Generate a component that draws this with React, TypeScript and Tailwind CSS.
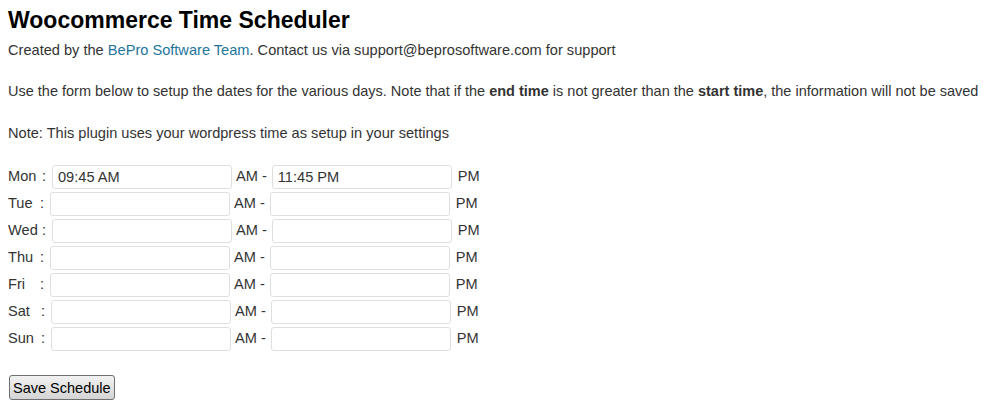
import React from "react";

const days = [
  { name: "Mon", width: "w-[40px]", start: "09:45 AM", end: "11:45 PM" },
  { name: "Tue", width: "w-[38px]", start: "", end: "" },
  { name: "Wed", width: "w-[40px]", start: "", end: "" },
  { name: "Thu", width: "w-[38px]", start: "", end: "" },
  { name: "Fri", width: "w-[38px]", start: "", end: "" },
  { name: "Sat", width: "w-[39px]", start: "", end: "" },
  { name: "Sun", width: "w-[39px]", start: "", end: "" },
];

export default function App() {
  return (
    <div className="min-h-[404px] bg-white px-2 pt-[7px] font-['Liberation_Sans',Arial,sans-serif] text-[14.6px] text-[#333]">
      <h2 className="text-[23px] font-bold leading-[26px] text-black">
        Woocommerce Time Scheduler
      </h2>
      <p className="mt-[8px] leading-[18px]">
        Created by the{" "}
        <a href="#" className="text-[#21759b]">
          BePro Software Team
        </a>
        . Contact us via support@beprosoftware.com for support
      </p>
      <p className="mt-[23px] whitespace-nowrap text-[14.5px] leading-[18px]">
        Use the form below to setup the dates for the various days. Note that
        if the <b>end time</b> is not greater than the <b>start time</b>, the
        information will not be saved
      </p>
      <p className="mt-[24px] leading-[18px]">
        Note: This plugin uses your wordpress time as setup in your settings
      </p>

      <div className="mt-[23px] flex flex-col gap-[3px]">
        {days.map((day) => (
          <div key={day.name} className="flex h-[24px] items-center">
            <span className={`${day.width} flex justify-between pr-[2px]`}>
              <span>{day.name}</span>
              <span>:</span>
            </span>
            <input
              type="text"
              defaultValue={day.start}
              className="ml-[4px] h-[24px] w-[180px] rounded-[3px] border border-[#dfdfdf] px-[5px] text-[14.6px] text-[#333] outline-none"
            />
            <span className="ml-[4px]">AM -</span>
            <input
              type="text"
              defaultValue={day.end}
              className="ml-[5px] h-[24px] w-[180px] rounded-[3px] border border-[#dfdfdf] px-[5px] text-[14.6px] text-[#333] outline-none"
            />
            <span className="ml-[6px]">PM</span>
          </div>
        ))}
      </div>

      <button
        type="button"
        className="ml-[1px] mt-[24px] h-[25px] rounded-[3px] border border-[#707070] bg-gradient-to-b from-[#f2f2f2] to-[#d4d4d4] px-[3px] text-[14.5px] leading-[20px] text-black"
      >
        Save Schedule
      </button>
    </div>
  );
}
